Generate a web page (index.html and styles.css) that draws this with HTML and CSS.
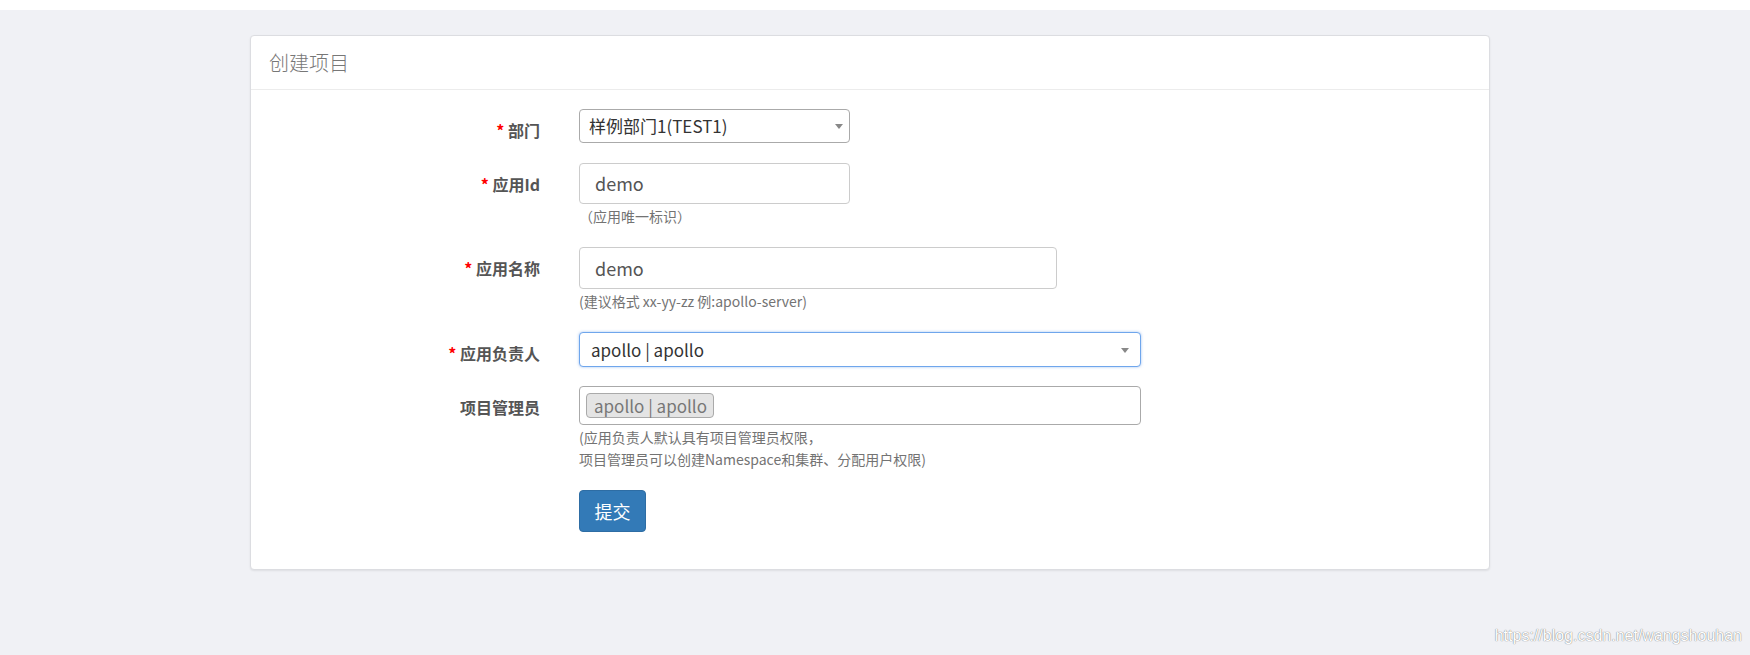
FILE: index.html
```html
<!DOCTYPE html>
<html lang="zh-CN">
<head>
<meta charset="utf-8">
<title>创建项目</title>
<link rel="stylesheet" href="styles.css">
</head>
<body>
<div class="topbar"></div>
<main class="page">
  <section class="panel">
    <header class="panel-heading">创建项目</header>
    <form class="panel-body">
      <div class="group">
        <label class="label"><span class="req">*</span> 部门</label>
        <div class="ctrl">
          <div class="select select-dept">样例部门1(TEST1)<span class="arrow"></span></div>
        </div>
      </div>
      <div class="group">
        <label class="label"><span class="req">*</span> 应用Id</label>
        <div class="ctrl">
          <div class="input input-id">demo</div>
          <p class="help">（应用唯一标识）</p>
        </div>
      </div>
      <div class="group">
        <label class="label"><span class="req">*</span> 应用名称</label>
        <div class="ctrl">
          <div class="input input-name">demo</div>
          <p class="help">(建议格式 xx-yy-zz 例:apollo-server)</p>
        </div>
      </div>
      <div class="group group-owner">
        <label class="label"><span class="req">*</span> 应用负责人</label>
        <div class="ctrl">
          <div class="select select-owner">apollo | apollo<span class="arrow"></span></div>
        </div>
      </div>
      <div class="group">
        <label class="label">项目管理员</label>
        <div class="ctrl">
          <div class="multi"><span class="tag">apollo | apollo</span></div>
          <p class="help">(应用负责人默认具有项目管理员权限，<br>项目管理员可以创建Namespace和集群、分配用户权限)</p>
        </div>
      </div>
      <div class="group group-submit">
        <div class="label"></div>
        <div class="ctrl">
          <button type="button" class="btn">提交</button>
        </div>
      </div>
    </form>
  </section>
</main>
<div class="watermark">https://blog.csdn.net/wangshouhan</div>
</body>
</html>
```
FILE: styles.css
```css
* { box-sizing: border-box; }
html, body { margin: 0; padding: 0; }
body {
  background: #f0f1f5;
  font-family: "Noto Sans CJK SC", "Noto Sans", sans-serif;
  color: #333;
  height: 655px;
  overflow: hidden;
  position: relative;
}
.topbar { height: 10px; background: #fff; }
.page { padding: 25px 0 0 250px; }
.panel {
  width: 1240px;
  background: #fff;
  border: 1px solid #dcdde1;
  border-radius: 4px;
  box-shadow: 0 1px 2px rgba(0,0,0,0.08);
}
.panel-heading {
  height: 54px;
  padding: 0 18px;
  border-bottom: 1px solid #ececec;
  font-size: 20px;
  font-weight: 300;
  line-height: 53px;
  color: #777;
}
.panel-body {
  padding: 19px 0 37px 0;
  margin: 0;
}
.group {
  display: grid;
  grid-template-columns: 289px 1fr;
  column-gap: 39px;
  margin-bottom: 20px;
}
.group-owner { margin-bottom: 19px; }
.group-submit { margin-bottom: 0; }
.label {
  text-align: right;
  padding-top: 10px;
  line-height: 22px;
  font-size: 16px;
  font-weight: bold;
  color: #555;
}
.req { color: #f00; }
.ctrl { min-width: 0; }
.select, .input, .multi {
  position: relative;
  border-radius: 4px;
  background: #fff;
}
.select-dept {
  width: 271px;
  height: 34px;
  border: 1px solid #aaa;
  padding-left: 9px;
  font-size: 17px;
  line-height: 32px;
  color: #333;
}
.select-owner {
  width: 562px;
  height: 35px;
  border: 1px solid #6fa6ec;
  box-shadow: 0 0 3px rgba(102,155,233,0.6);
  padding-left: 11px;
  font-size: 17px;
  line-height: 33px;
  color: #333;
}
.arrow {
  position: absolute;
  top: 50%;
  margin-top: -2px;
  width: 0;
  height: 0;
  border-style: solid;
  border-width: 5px 4px 0 4px;
  border-color: #888 transparent transparent transparent;
}
.select-dept .arrow { right: 6px; }
.select-owner .arrow { right: 11px; }
.input {
  height: 41px;
  border: 1px solid #ccc;
  padding-left: 15px;
  font-size: 18px;
  line-height: 39px;
  color: #555;
}
.input-id { width: 271px; }
.input-name { width: 478px; height: 42px; line-height: 40px; }
.multi {
  width: 562px;
  height: 39px;
  border: 1px solid #aaa;
  padding: 6px 0 0 6px;
}
.tag {
  display: inline-block;
  height: 25px;
  padding: 0 6px 0 7px;
  background: #e4e4e4;
  border: 1px solid #aaa;
  border-radius: 4px;
  font-size: 17px;
  line-height: 23px;
  color: #777;
}
.help {
  margin: 1px 0 0 0;
  font-size: 14px;
  line-height: 22px;
  color: #737373;
}
.btn {
  display: block;
  width: 67px;
  height: 42px;
  padding: 0;
  background: #337ab7;
  border: 1px solid #2e6da4;
  border-radius: 4px;
  color: #fff;
  font-family: "Noto Sans CJK SC", sans-serif;
  font-size: 18px;
  line-height: 40px;
  text-align: center;
}
.watermark {
  position: absolute;
  right: 8px;
  top: 627px;
  font-family: "Liberation Sans", Arial, sans-serif;
  font-size: 16px;
  line-height: 18px;
  color: #fff;
  text-shadow: 0 0 1px rgba(0,0,0,0.45), 0 0 1px rgba(0,0,0,0.3);
}
```
